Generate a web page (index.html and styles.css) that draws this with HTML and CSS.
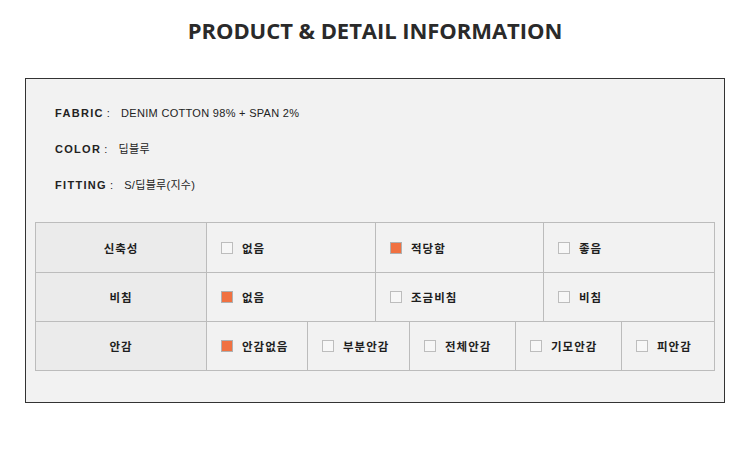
FILE: index.html
```html
<!DOCTYPE html>
<html lang="ko">
<head>
<meta charset="utf-8">
<title>Product &amp; Detail Information</title>
<link rel="stylesheet" href="styles.css">
</head>
<body>
<h1 class="title">PRODUCT &amp; DETAIL INFORMATION</h1>
<div class="box">
  <div class="info">
    <p class="line"><b class="key">FABRIC</b><span class="colon">:</span><span class="val">DENIM COTTON 98% + SPAN 2%</span></p>
    <p class="line"><b class="key">COLOR</b><span class="colon">:</span><span class="val">딥블루</span></p>
    <p class="line"><b class="key">FITTING</b><span class="colon">:</span><span class="val">S/딥블루(지수)</span></p>
  </div>
  <div class="table">
    <div class="row row4 r1">
      <div class="cell head">신축성</div>
      <div class="cell"><i class="cb"></i>없음</div>
      <div class="cell"><i class="cb on"></i>적당함</div>
      <div class="cell"><i class="cb"></i>좋음</div>
    </div>
    <div class="row row4">
      <div class="cell head">비침</div>
      <div class="cell"><i class="cb on"></i>없음</div>
      <div class="cell"><i class="cb"></i>조금비침</div>
      <div class="cell"><i class="cb"></i>비침</div>
    </div>
    <div class="row row6">
      <div class="cell head">안감</div>
      <div class="cell"><i class="cb on"></i>안감없음</div>
      <div class="cell"><i class="cb"></i>부분안감</div>
      <div class="cell"><i class="cb"></i>전체안감</div>
      <div class="cell"><i class="cb"></i>기모안감</div>
      <div class="cell"><i class="cb"></i>피안감</div>
    </div>
  </div>
</div>
</body>
</html>
```
FILE: styles.css
```css
* { box-sizing: border-box; }
body {
  margin: 0;
  background: #fff;
  font-family: "Liberation Sans", "Noto Sans CJK KR", sans-serif;
  color: #222;
}
.title {
  margin: 0;
  height: 62px;
  line-height: 60px;
  text-align: center;
  font-family: "Open Sans", "Liberation Sans", sans-serif;
  font-weight: 700;
  font-size: 22px;
  color: #2a2a2a;
  letter-spacing: -0.05px;
}
.box {
  margin: 16px 0 0 25px;
  width: 700px;
  border: 1px solid #333;
  background: #f2f2f2;
  padding: 16px 9px 31px;
}
.info { padding: 0 0 19px 20px; }
.line {
  margin: 0;
  height: 36px;
  line-height: 36px;
  font-size: 11px;
  letter-spacing: 0.3px;
}
.key { font-weight: 700; letter-spacing: 1.3px; }
.colon { margin: 0 11px 0 3px; }
.val { font-family: "Liberation Sans", "Noto Sans CJK KR", sans-serif; }
.table {
  width: 680px;
  border-top: 1px solid #bcbcbc;
  border-left: 1px solid #bcbcbc;
}
.row { display: grid; height: 49px; }
.row.r1 { height: 50px; }
.row4 { grid-template-columns: 171px 169px 168px 171px; }
.row6 { grid-template-columns: 171px 101px 102px 106px 106px 93px; }
.cell {
  display: flex;
  align-items: center;
  padding-left: 14px;
  border-right: 1px solid #bcbcbc;
  border-bottom: 1px solid #bcbcbc;
  font-family: "Noto Sans CJK KR", sans-serif;
  font-weight: 700;
  font-size: 11.5px;
  letter-spacing: 1px;
  color: #1e1e1e;
}
.cell.head {
  justify-content: center;
  padding-left: 0;
  background: #ebebeb;
}
.cb {
  width: 12px;
  height: 12px;
  border: 1px solid #bdbdbd;
  background: #f7f7f7;
  margin-right: 9px;
  flex: none;
}
.cb.on { background: #f07141; border-color: #b0b0b0; }
```
